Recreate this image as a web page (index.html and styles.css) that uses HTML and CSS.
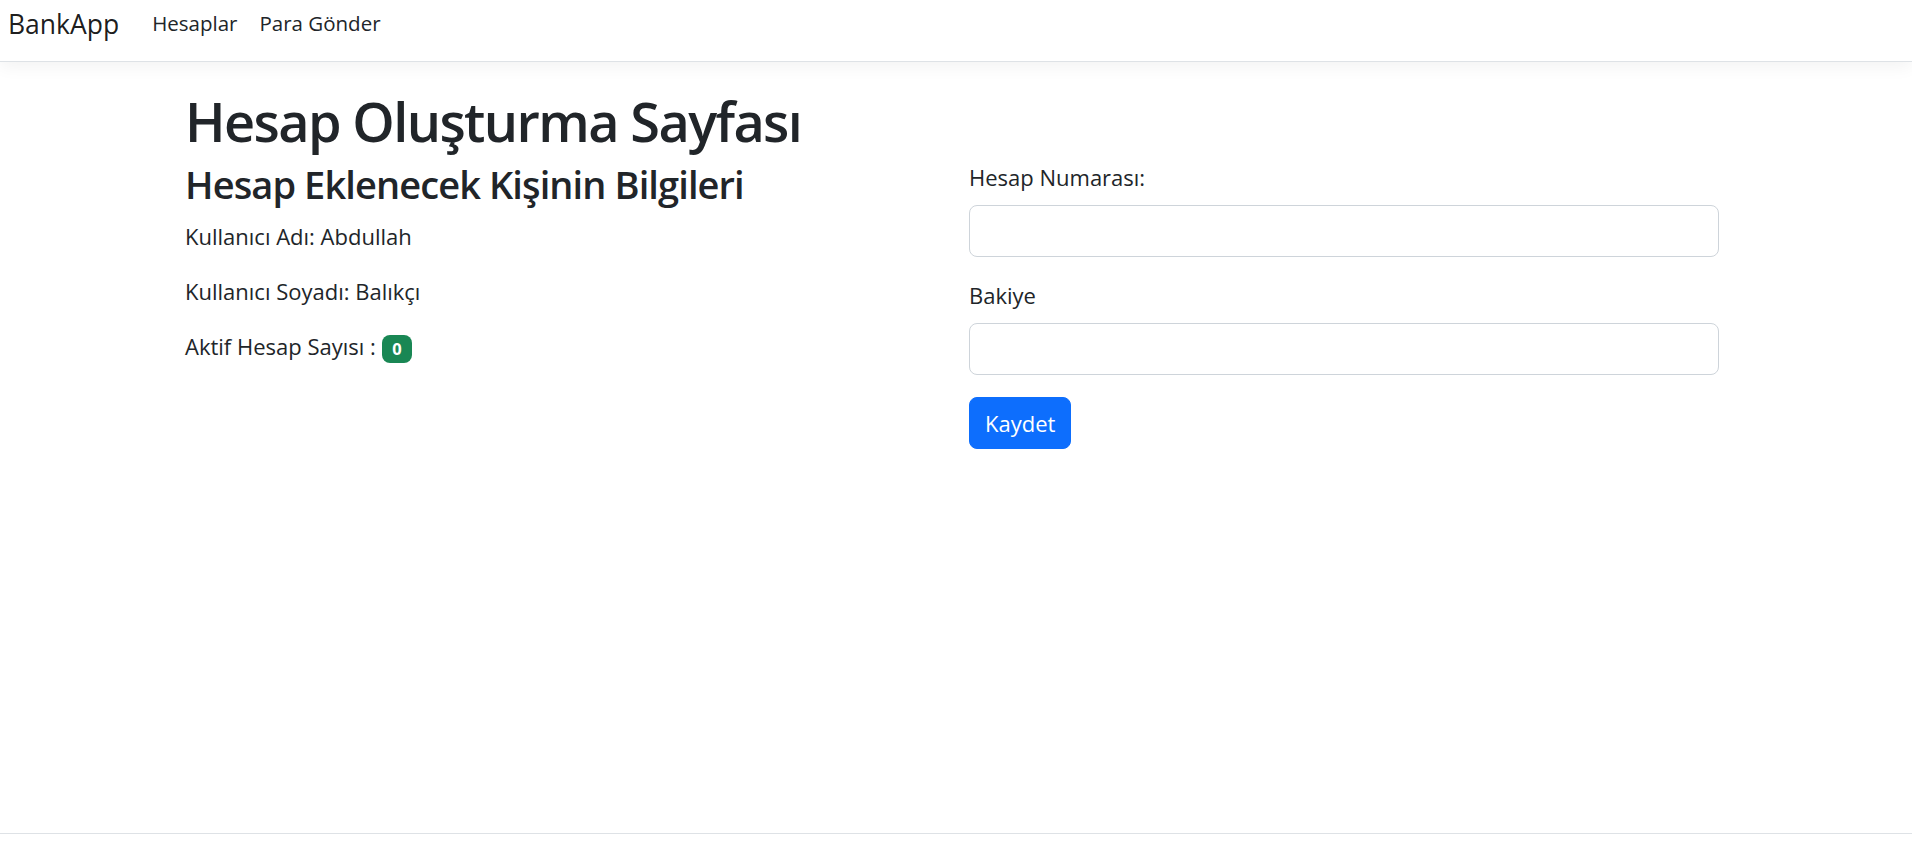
FILE: index.html
```html
<!DOCTYPE html>
<html lang="tr">
<head>
<meta charset="utf-8">
<title>BankApp</title>
<link rel="stylesheet" href="styles.css">
</head>
<body>
<div class="page">
  <header class="navbar">
    <a class="brand" href="#">BankApp</a>
    <nav class="nav">
      <a class="nav-link" href="#">Hesaplar</a>
      <a class="nav-link" href="#">Para Gönder</a>
    </nav>
  </header>
  <main class="container">
    <h1 class="title">Hesap Oluşturma Sayfası</h1>
    <div class="row">
      <section class="col">
        <h3 class="subtitle">Hesap Eklenecek Kişinin Bilgileri</h3>
        <p class="info">Kullanıcı Adı: Abdullah</p>
        <p class="info">Kullanıcı Soyadı: Balıkçı</p>
        <p class="info">Aktif Hesap Sayısı : <span class="badge">0</span></p>
      </section>
      <section class="col">
        <form class="form">
          <div class="group">
            <label class="label" for="no">Hesap Numarası:</label>
            <input class="input" id="no" type="text">
          </div>
          <div class="group">
            <label class="label" for="bk">Bakiye</label>
            <input class="input" id="bk" type="text">
          </div>
          <button class="btn" type="button">Kaydet</button>
        </form>
      </section>
    </div>
  </main>
  <footer class="footer"></footer>
</div>
</body>
</html>
```

FILE: styles.css
```css
* { box-sizing: border-box; }
html, body { margin: 0; padding: 0; height: 100%; overflow: hidden; }
body {
  font-family: "Open Sans", "Noto Sans", sans-serif;
  font-size: 22px;
  line-height: 33px;
  color: #212529;
  background: #fff;
}
.page {
  display: flex;
  flex-direction: column;
  min-height: 842px;
}
.navbar {
  height: 62px;
  display: flex;
  align-items: flex-start;
  padding: 6px 8px 0;
  border-bottom: 1px solid #dee2e6;
  box-shadow: 0 5px 16px rgba(0, 0, 0, 0.05);
  background: #fff;
}
.brand {
  font-size: 26.5px;
  line-height: 36px;
  color: rgba(0, 0, 0, 0.9);
  text-decoration: none;
  margin-right: 22px;
}
.nav { display: flex; padding-top: 2px; }
.nav-link {
  color: #212529;
  text-decoration: none;
  font-size: 20.5px;
  line-height: 30px;
  padding: 0 11px;
}
.container {
  flex: 1;
  width: 1535px;
  margin: 26px 0 0 185px;
}
.title {
  margin: 0 0 7px;
  font-size: 54px;
  line-height: 66px;
  font-weight: 600;
  letter-spacing: -1.6px;
}
.row {
  display: grid;
  grid-template-columns: 750px 750px;
  column-gap: 34px;
}
.subtitle {
  margin: 0 0 13px;
  font-size: 38px;
  line-height: 46px;
  font-weight: 600;
  letter-spacing: -0.9px;
}
.info { margin: 0 0 22px; }
.badge {
  display: inline-block;
  background: #198754;
  color: #fff;
  font-size: 16.5px;
  font-weight: 700;
  line-height: 1;
  padding: 5.8px 10.7px;
  border-radius: 8px;
  vertical-align: baseline;
}
.form { margin: 0; }
.group { margin-bottom: 22px; }
.label { display: block; margin-bottom: 11px; }
.input {
  display: block;
  width: 100%;
  height: 52px;
  border: 1px solid #ced4da;
  border-radius: 8px;
  font: inherit;
  padding: 8px 16px;
}
.btn {
  font: inherit;
  color: #fff;
  background: #0d6efd;
  border: 1px solid #0d6efd;
  border-radius: 8px;
  padding: 8px 15px;
  height: 52px;
}
.footer {
  height: 9px;
  border-top: 1px solid #dee2e6;
}
```
